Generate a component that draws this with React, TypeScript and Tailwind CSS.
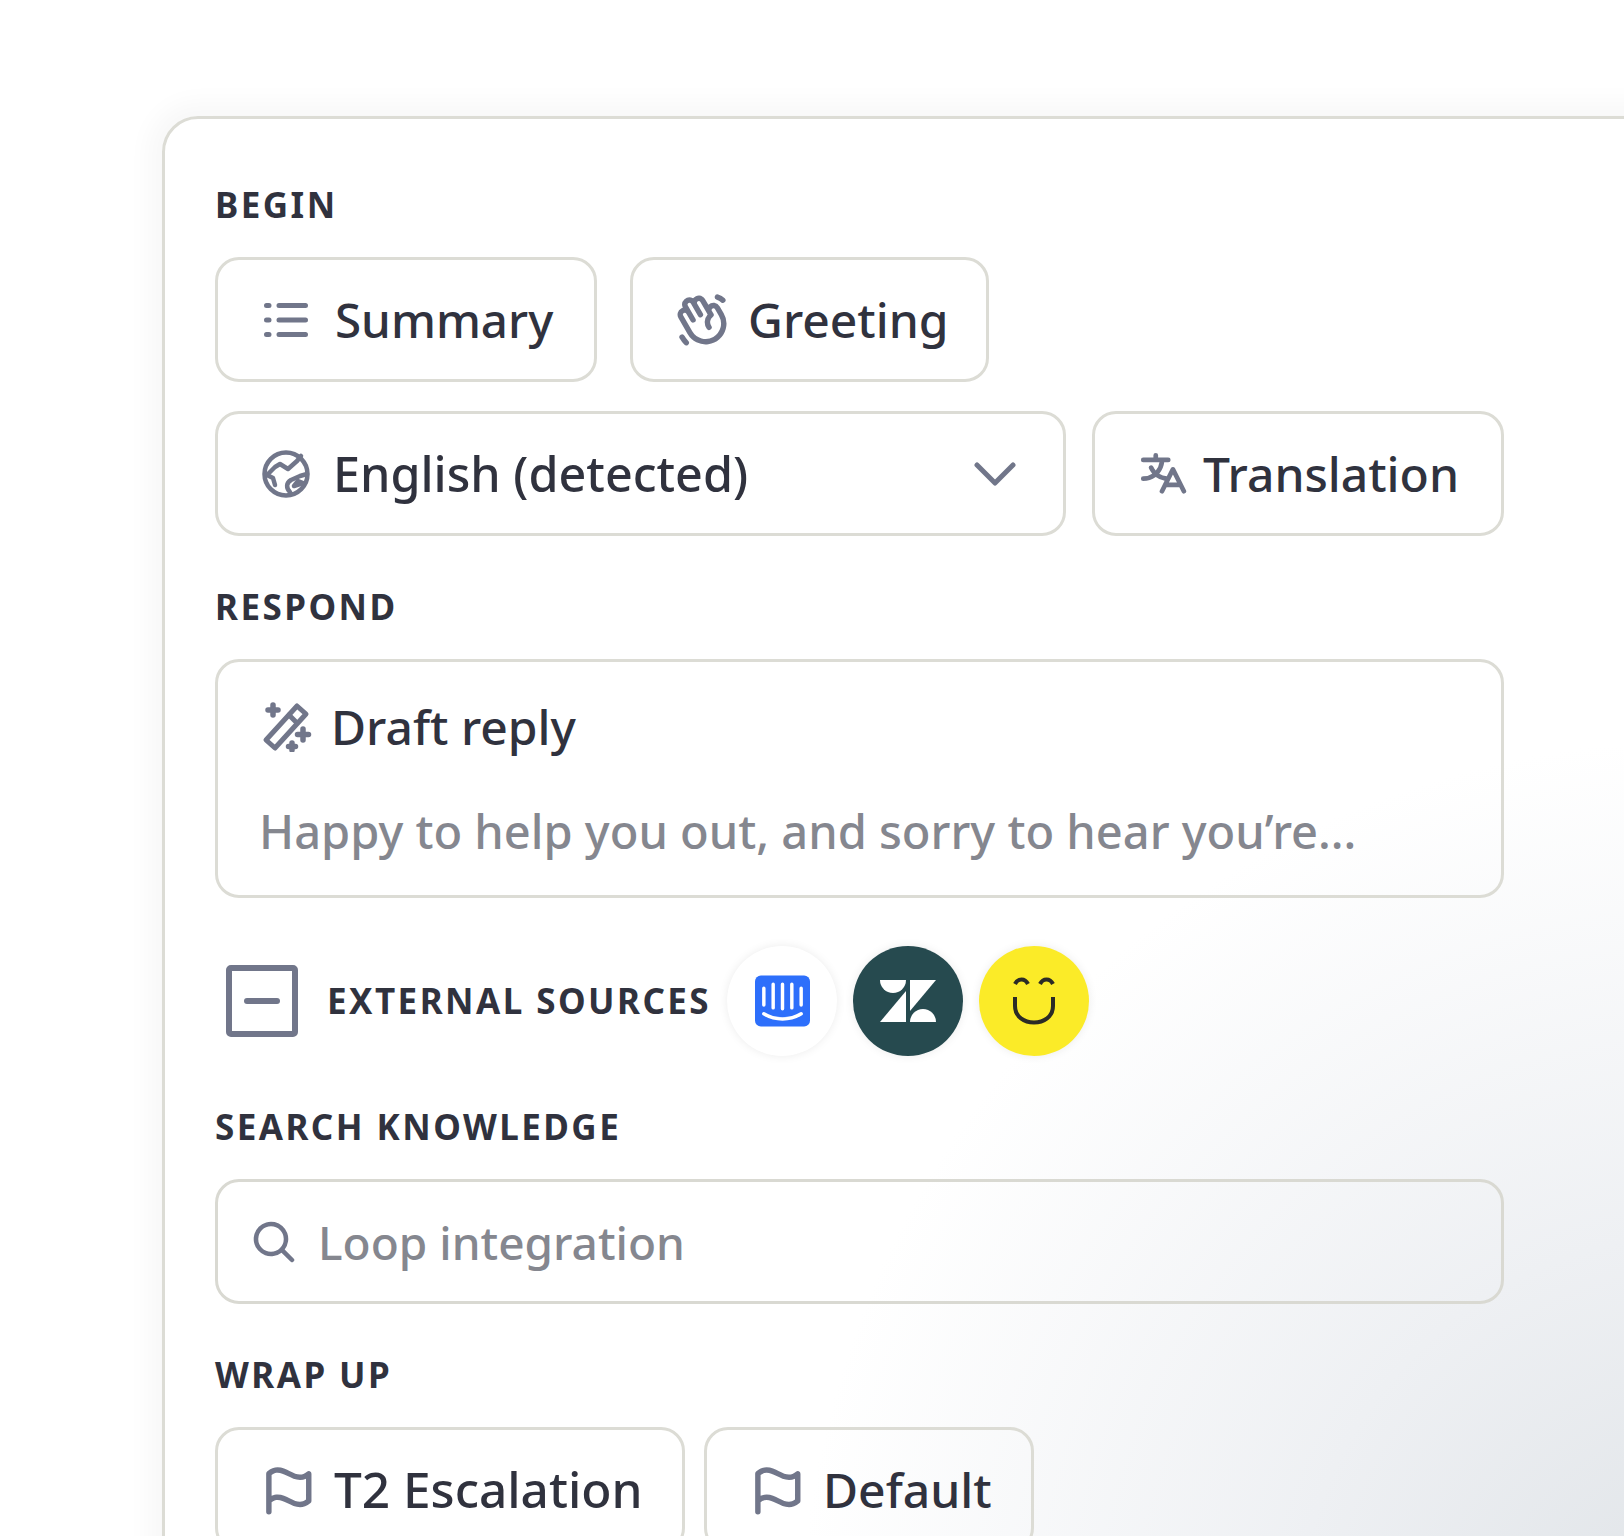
import React from 'react';
import { PiFlagBold, PiHandWavingBold, PiMagnifyingGlassBold, PiTranslateBold } from 'react-icons/pi';

const font = { fontFamily: '"Noto Sans", "Open Sans", sans-serif' };

const SectionLabel = ({ children }: { children: React.ReactNode }) => (
  <h3 className="text-[35px] leading-[40px] font-bold tracking-[0.07em] text-[#30323e]">{children}</h3>
);

const Chip = ({
  icon,
  label,
  className,
  labelClassName = 'text-[48px]',
  children,
}: {
  icon: React.ReactNode;
  label: string;
  className: string;
  labelClassName?: string;
  children?: React.ReactNode;
}) => (
  <div className={`flex h-[125px] items-center rounded-[24px] border-[3px] border-[#dcdcd5] ${className}`}>
    {icon}
    <span className={`leading-none font-medium text-[#30323e] ${labelClassName}`}>{label}</span>
    {children}
  </div>
);

const ListIcon = () => (
  <svg viewBox="0 0 44 34" className="mr-[27px] h-[34px] w-[44px] shrink-0" fill="none" stroke="#71768a" strokeWidth="5" strokeLinecap="round">
    <path d="M2.500 2.500 H5 M2.500 17 H5 M2.500 31.500 H5" />
    <path d="M15 2.500 H41.500 M15 17 H41.500 M15 31.500 H41.500" />
  </svg>
);

const GlobeIcon = () => (
  <svg viewBox="0 0 48 48" className="mr-[23px] h-[48px] w-[48px] shrink-0" fill="none" stroke="#71768a" strokeWidth="4.500" strokeLinecap="round" strokeLinejoin="round">
    <circle cx="24" cy="24" r="21.500" />
    <path d="M5 25 L13 17 L18 14 L26 19 L35 11 L39 6" />
    <path d="M5 25 L11 28 L13 35" />
    <path d="M28 42 C24 38 24 33 29 30 L38 26 L45 24" />
    <path d="M32 36 L36 31 L41 33 Z" fill="#71768a" />
  </svg>
);

const WandIcon = () => (
  <svg viewBox="0 0 50 50" className="mr-[19px] h-[50px] w-[50px] shrink-0" fill="none" stroke="#71768a" strokeWidth="5" strokeLinecap="round" strokeLinejoin="round">
    <path d="M35 4 L44 12 L13 46 L4 38 Z" />
    <path d="M27 13 L35 21" />
    <path d="M11 3 V13 M6 8 H16" strokeWidth="5.500" />
    <path d="M41 27 V38 M35.500 32.500 H46.500" strokeWidth="5.500" />
    <path d="M30 41 V48 M26.500 44.500 H33.500" strokeWidth="5.500" />
  </svg>
);

const IntercomLogo = () => (
  <svg viewBox="0 0 56 52" className="h-[52px] w-[55px]">
    <rect width="56" height="52" rx="6" fill="#2d6ffb" />
    <g stroke="#fff" strokeWidth="3.500" strokeLinecap="round" fill="none">
      <path d="M9 13 V30 M18.500 9 V33 M28 9 V34 M37.500 9 V33 M47 13 V30" />
      <path d="M9 39 C20 46 36 46 47 39" />
    </g>
  </svg>
);

const ZendeskLogo = () => (
  <svg viewBox="0 0 56 42" className="h-[42px] w-[56px]" fill="#fff">
    <path d="M0 0 H26 A13 13 0 0 1 0 0 Z" />
    <path d="M26 11 V42 H0 Z" />
    <path d="M30 31 V0 H56 Z" />
    <path d="M30 42 A13 13 0 0 1 56 42 Z" />
  </svg>
);

const SmileLogo = () => (
  <svg viewBox="0 0 42 48" className="h-[48px] w-[42px]" fill="none" stroke="#2b2b26" strokeWidth="4">
    <path d="M2 7 C5 1 12 1 15 7" />
    <path d="M27 7 C30 1 37 1 40 7" />
    <path d="M2 20 V29 C2 51 40 51 40 29 V20" />
  </svg>
);

export default function App() {
  return (
    <div
      className="h-[1536px] w-[1624px] overflow-hidden bg-white pt-[116px] pl-[162px] bg-[radial-gradient(ellipse_900px_900px_at_1700px_1640px,#dfe3e7_0%,#eef0f3_45%,#ffffff_100%)]"
      style={font}
    >
      <div className="h-[1600px] w-[1600px] rounded-[36px] border-[3px] border-[#dcdcd5] pt-[66px] pl-[50px] shadow-[0_0_24px_14px_rgba(0,0,0,0.03)]">
        <div className="flex w-[1289px] flex-col">
          <SectionLabel>BEGIN</SectionLabel>

          <div className="mt-[32px] flex gap-[33px]">
            <Chip className="w-[382px] pl-[46px]" icon={<ListIcon />} label="Summary" labelClassName="text-[47.500px]" />
            <Chip
              className="w-[359px] pl-[40px]"
              icon={<PiHandWavingBold className="mr-[17px] h-[58px] w-[58px] shrink-0 text-[#71768a]" />}
              label="Greeting"
            />
          </div>

          <div className="mt-[29px] flex gap-[26px]">
            <Chip
              className="w-[851px] pl-[44px] pr-[47px]"
              icon={<GlobeIcon />}
              label="English (detected)"
              labelClassName="text-[48.500px]"
            >
              <svg viewBox="0 0 42 24" className="ml-auto h-[24px] w-[42px]" fill="none" stroke="#71768a" strokeWidth="5" strokeLinecap="round" strokeLinejoin="round">
                <path d="M3 3 L21 21 L39 3" />
              </svg>
            </Chip>
            <Chip
              className="w-[412px] pl-[42px]"
              icon={<PiTranslateBold className="mr-[16px] h-[50px] w-[50px] shrink-0 text-[#71768a]" />}
              label="Translation"
            />
          </div>

          <div className="mt-[51px]">
            <SectionLabel>RESPOND</SectionLabel>
          </div>

          <div className="mt-[32px] flex h-[239px] flex-col rounded-[24px] border-[3px] border-[#dcdcd5] pt-[35px] pl-[41px]">
            <div className="flex items-center pl-[3px]">
              <WandIcon />
              <span className="text-[48px] leading-[60px] font-medium text-[#30323e]">Draft reply</span>
            </div>
            <p className="mt-[44px] text-[47px] leading-[60px] font-medium text-[#85878f]">Happy to help you out, and sorry to hear you’re...</p>
          </div>

          <div className="mt-[48px] flex h-[110px] items-center pl-[11px]">
            <div className="flex h-[72px] w-[72px] items-center justify-center rounded-[5px] border-[6px] border-[#71768a]">
              <div className="h-[6px] w-[36px] rounded-full bg-[#71768a]" />
            </div>
            <span className="ml-[29px] text-[35px] font-bold tracking-[0.07em] text-[#30323e]">EXTERNAL SOURCES</span>
            <div className="ml-[16px] flex gap-[16px]">
              <div className="flex h-[110px] w-[110px] items-center justify-center rounded-full bg-white shadow-[0_0_10px_rgba(0,0,0,0.08)]">
                <IntercomLogo />
              </div>
              <div className="flex h-[110px] w-[110px] items-center justify-center rounded-full bg-[#264a4f] shadow-[0_0_10px_rgba(0,0,0,0.08)]">
                <ZendeskLogo />
              </div>
              <div className="flex h-[110px] w-[110px] items-center justify-center rounded-full bg-[#fbeb28] shadow-[0_0_10px_rgba(0,0,0,0.08)]">
                <SmileLogo />
              </div>
            </div>
          </div>

          <div className="mt-[51px]">
            <SectionLabel>SEARCH KNOWLEDGE</SectionLabel>
          </div>

          <div className="mt-[32px] flex h-[125px] items-center rounded-[24px] border-[3px] border-[#d9d9d2] pl-[32px]">
            <PiMagnifyingGlassBold className="mr-[20px] h-[48px] w-[48px] shrink-0 text-[#71768a]" />
            <span className="text-[46px] leading-none font-medium text-[#85878f]">Loop integration</span>
          </div>

          <div className="mt-[51px]">
            <SectionLabel>WRAP UP</SectionLabel>
          </div>

          <div className="mt-[32px] flex gap-[19px]">
            <Chip
              className="w-[470px] pl-[40px]"
              icon={<PiFlagBold className="mr-[18px] h-[58px] w-[58px] shrink-0 text-[#71768a]" />}
              label="T2 Escalation"
              labelClassName="text-[49.500px]"
            />
            <Chip
              className="w-[330px] pl-[40px]"
              icon={<PiFlagBold className="mr-[18px] h-[58px] w-[58px] shrink-0 text-[#71768a]" />}
              label="Default"
            />
          </div>
        </div>
      </div>
    </div>
  );
}
